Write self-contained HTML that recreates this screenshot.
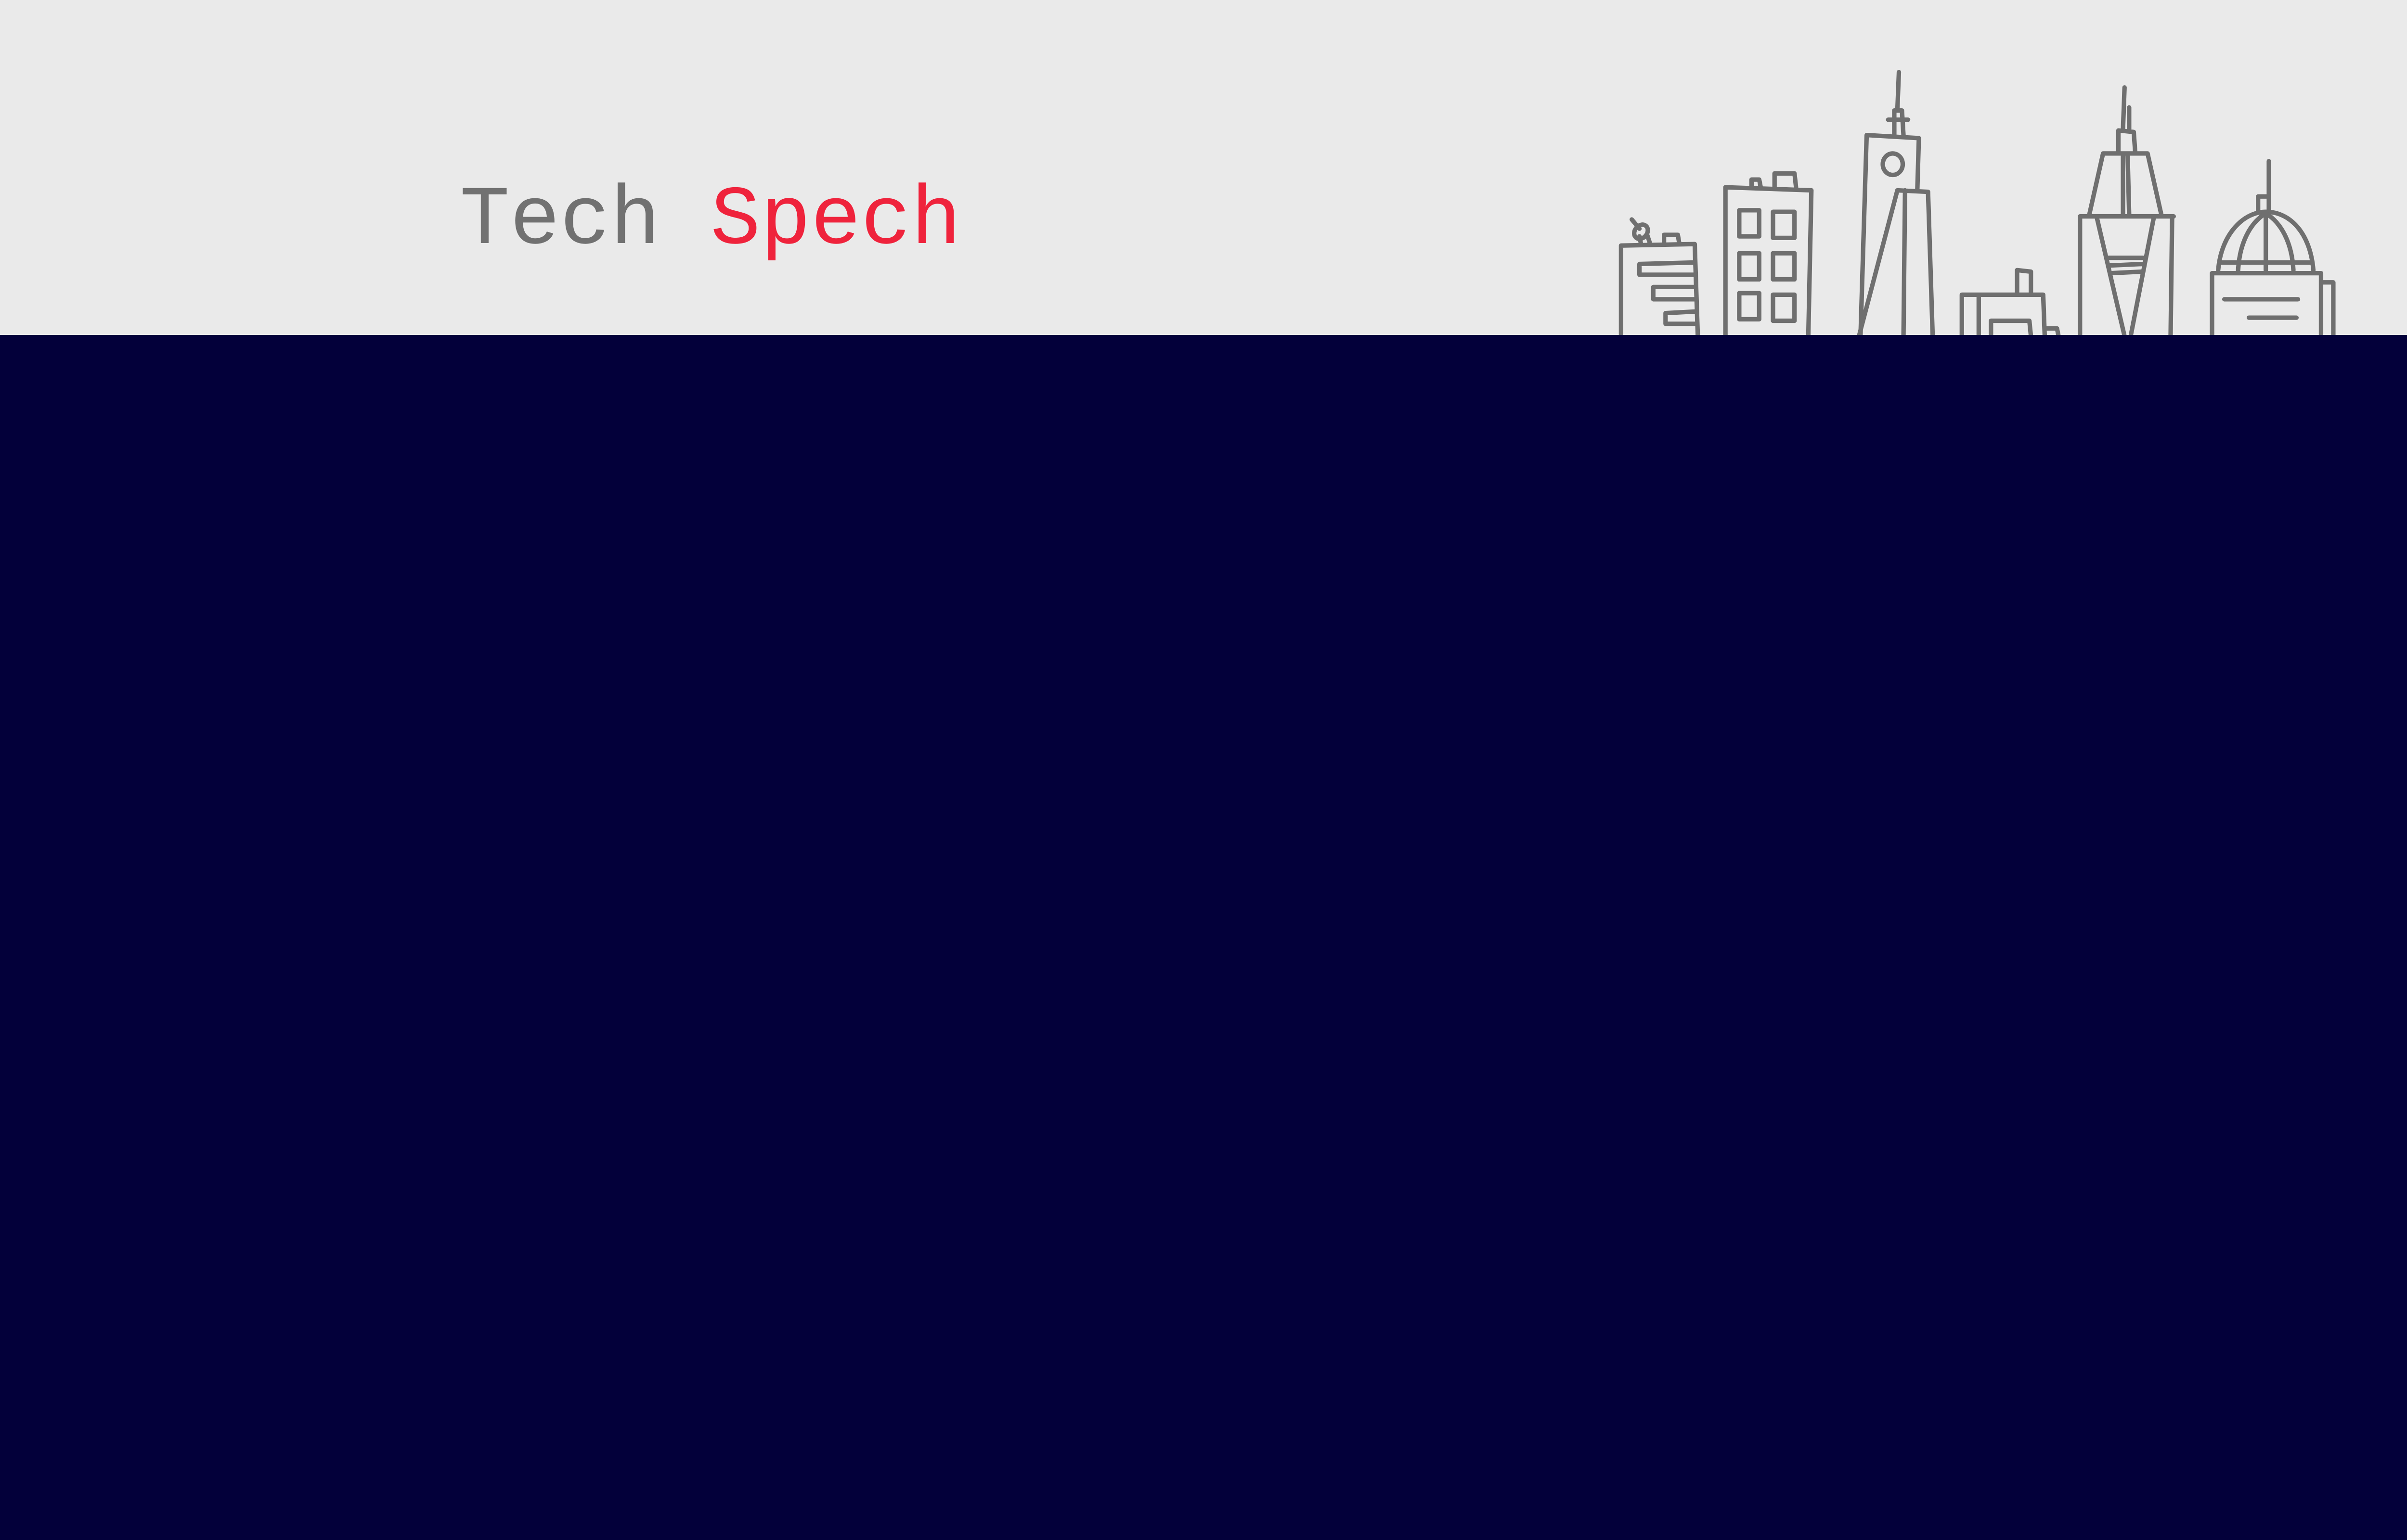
<!DOCTYPE html>
<html><head><meta charset="utf-8"><style>
html,body{margin:0;padding:0;width:100%;height:100%;overflow:hidden;}
body{background:#03003a;position:relative;}
#top{position:absolute;left:0;top:0;width:100%;height:13.924vw;background:#eaeaea;}
#logo{position:absolute;left:19.097vw;top:7.19vw;font-family:"Liberation Mono",monospace;font-size:3.472vw;line-height:3.993vw;white-space:pre;color:#717171;}
#logo span{color:#ef233c;}
svg{position:absolute;left:0;top:0;width:100vw;height:13.924vw;}
</style></head><body>
<div id="top"></div>
<div id="logo">Tech <span>Spech</span></div>
<svg viewBox="0 0 1568 218.3" preserveAspectRatio="none" fill="none" stroke="#6f6f6f" stroke-width="2.9" stroke-linejoin="round" stroke-linecap="round">
<path d="M1056 219 L1056 160 L1104 159 L1106 219"/>
<path d="M1084 159 L1084 153 L1093 153 L1094 159"/>
<path d="M1104 171 L1068 172 L1068 179 L1104 179"/>
<path d="M1104 187 L1077 187 L1077 195 L1104 195"/>
<path d="M1104 203 L1085 204 L1085 211 L1104 211"/>
<ellipse cx="1069" cy="151" rx="4" ry="5" transform="rotate(40 1069 151)"/>
<path d="M1063 143 L1068 149 M1068 154 L1069 159 M1073 153 L1075 159"/>
<path d="M1124 219 L1124 122 L1180 124 L1178 219"/>
<path d="M1141 122 L1141 117 L1146 117 L1147 122 M1156 122 L1156 113 L1169 113 L1170 122"/>
<rect x="1133" y="137" width="13" height="17"/>
<rect x="1155" y="138" width="14" height="17"/>
<rect x="1133" y="165" width="13" height="17"/>
<rect x="1155" y="165" width="14" height="17"/>
<rect x="1133" y="191" width="13" height="17"/>
<rect x="1155" y="192" width="14" height="17"/>
<path d="M1212 219 L1216 88 L1250 90 L1249 124"/>
<path d="M1237 47 L1236 72 M1234 88 L1234 72 L1239 72 L1240 88 M1230 78 L1243 78"/>
<ellipse cx="1233" cy="107" rx="6.5" ry="7"/>
<path d="M1211 219 L1236 124 L1256 125 L1259 219 M1241 124 L1240 219"/>
<path d="M1278 219 L1278 192 L1331 192 L1332 219 M1289 193 L1289 219 M1297 219 L1297 209 L1322 209 L1323 219 M1314 192 L1314 176 L1323 177 L1323 192 M1332 214 L1340 214 L1341 219"/>
<path d="M1384 57 L1383 84 M1387 70 L1387 84 M1380 100 L1380 85 L1390 86 L1391 100"/>
<path d="M1361 140 L1370 100 L1399 100 L1408 140 M1370 100 L1399 100 M1383 100 L1383 140 M1386 100 L1387 140"/>
<path d="M1355 219 L1355 141 L1415 141 L1414 219 M1355 141 L1416 141"/>
<path d="M1366 142 L1384 219 M1403 142 L1388 219"/>
<path d="M1373 168 L1396 168 M1374 173 L1396 172 M1375 178 L1395 177"/>
<path d="M1478 105 L1478 128 M1471 138 L1471 128 L1478 128 L1478 138"/>
<path d="M1445 176 C1447 152 1462 138 1476 138 C1492 138 1505 152 1507 176"/>
<path d="M1458 176 C1459 158 1466 145 1476 139 M1494 176 C1493 158 1486 145 1476 139 M1476 139 L1476 176"/>
<path d="M1446 171 L1506 171"/>
<path d="M1441 219 L1441 178 L1512 178 L1512 219 M1512 184 L1520 184 L1520 219"/>
<path d="M1449 195 L1497 195 M1465 207 L1496 207"/>
</svg>
</body></html>
